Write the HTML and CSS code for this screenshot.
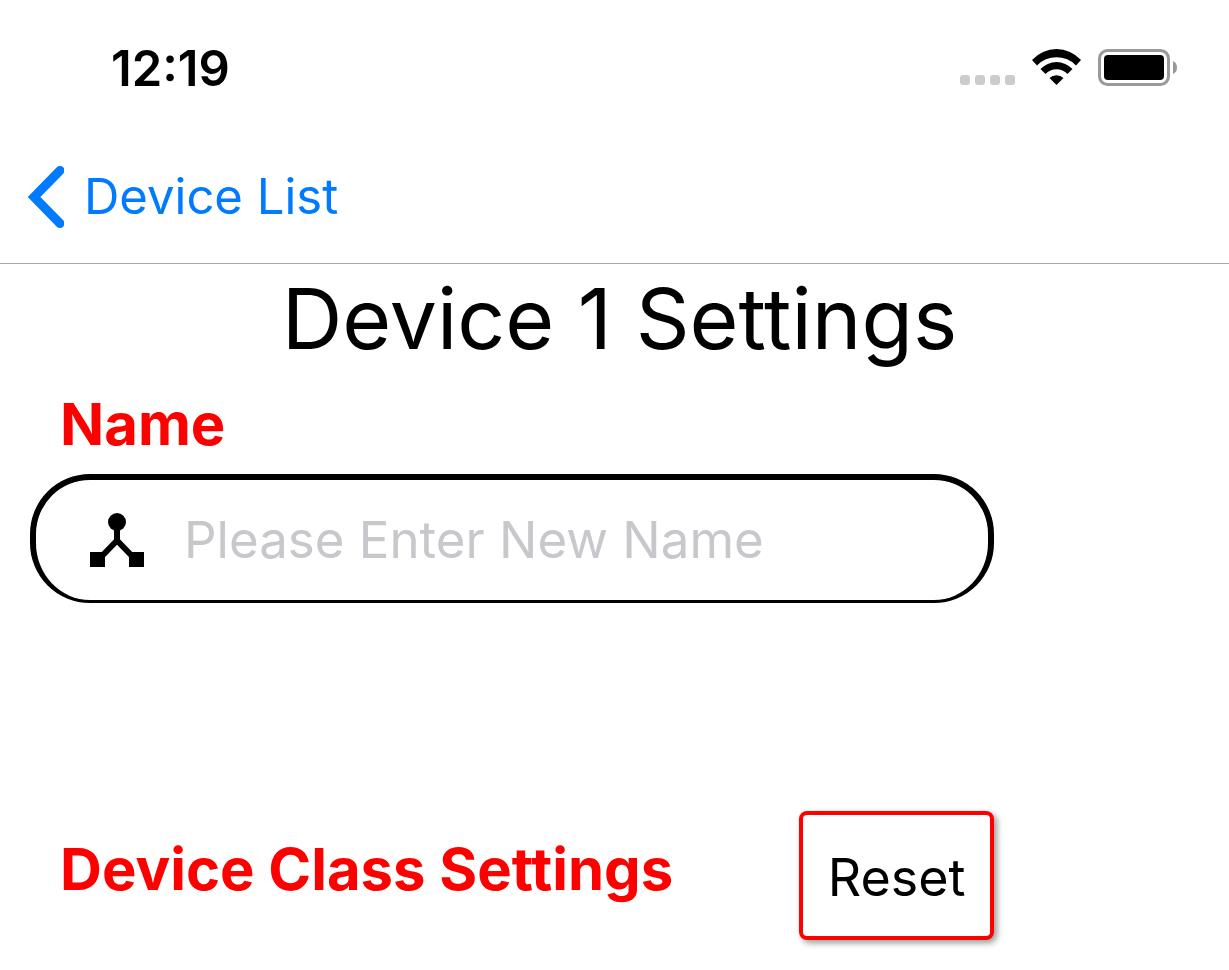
FILE: index.html
```html
<!DOCTYPE html>
<html lang="en">
<head>
<meta charset="utf-8">
<title>Device 1 Settings</title>
<link rel="stylesheet" href="styles.css">
</head>
<body>
<div class="status">
  <time class="clock">12:19</time>
  <div class="indicators">
    <svg width="56" height="37" viewBox="0 0 56 37" aria-hidden="true"><g fill="#ccc"><rect width="10" height="10" y="26" rx="3"/><rect x="15" width="10" height="10" y="26" rx="3"/><rect x="30" width="10" height="10" y="26" rx="3"/><rect x="45" width="10" height="10" y="26" rx="3"/></g></svg>
    <svg width="50" height="37" viewBox="0 0 50 37" aria-hidden="true"><path d="M0 11A33 33 0 0 1 49 11L44 16.500A27 27 0 0 0 5 16.500Z"/><path d="M8.500 20A22 22 0 0 1 40.500 20L35.500 25A15 15 0 0 0 13.500 25Z"/><path d="M17.500 29A10 10 0 0 1 31.500 29L24.500 36Z"/></svg>
    <svg width="80" height="37" viewBox="0 0 80 37" aria-hidden="true"><rect x="1.500" y="1.500" width="69" height="34" rx="8" fill="none" stroke="#999" stroke-width="3"/><rect x="6" y="6" width="60" height="25" rx="4"/><path d="M75 12q4 2 4 6.500t-4 6.500z" fill="#999"/></svg>
  </div>
</div>
<nav class="nav">
  <a class="back" href="#"><svg width="36" height="62" viewBox="0 0 36 62" aria-hidden="true"><path d="M32 4.500L6 31l26 26.500" fill="none" stroke="#007aff" stroke-width="9" stroke-linecap="round"/></svg><span>Device List</span></a>
</nav>
<main class="main">
  <h1 class="title">Device 1 Settings</h1>
  <form class="form">
    <label class="heading" for="name">Name</label>
    <div class="field">
      <svg width="54" height="54" viewBox="0 0 54 54" aria-hidden="true"><circle cx="27" cy="9" r="9"/><path d="M0 39h15v15H0zM39 39h15v15H39z"/><path d="M27 15v12M12 43l15-15.500L42 43" fill="none" stroke="#000" stroke-width="6"/></svg>
      <input class="input" id="name" type="text" placeholder="Please Enter New Name">
    </div>
    <div class="row">
      <h2 class="heading">Device Class Settings</h2>
      <button class="reset" type="button">Reset</button>
    </div>
  </form>
</main>
</body>
</html>
```
FILE: styles.css
```css
* { box-sizing: border-box; }
body { margin: 0; background: #fff; color: #000; font-family: Inter, "Liberation Sans", sans-serif; }
h1, h2 { margin: 0; }
svg { display: block; flex: none; }
.status { display: flex; justify-content: space-between; align-items: center; height: 136px; padding: 0 51px 0 111px; }
.clock { padding-top: 1px; font-size: 49px; font-weight: 600; line-height: 56px; }
.indicators { display: flex; align-items: center; gap: 16px; padding-bottom: 2px; }
.nav { display: flex; height: 128px; padding: 0 28px 6px; align-items: center; border-bottom: 1px solid #a7a7aa; }
.back { display: flex; align-items: center; gap: 20px; color: #007aff; font-size: 49px; line-height: 60px; text-decoration: none; }
.title { padding-left: 10px; font-size: 84px; font-weight: 400; line-height: 110px; text-align: center; }
.form { width: 81%; margin-top: 14px; padding: 0 1px 24px 30px; }
.heading { display: block; padding-left: 30px; color: red; font-size: 58px; font-weight: 700; line-height: 72px; }
.field { display: flex; align-items: center; gap: 40px; height: 129px; margin-top: 14px; padding: 0 54px; border: 6px solid #000; border-bottom-width: 3px; border-radius: 60px; }
.input { flex: 1; min-width: 0; padding: 0; border: 0; outline: 0; background: none; color: #000; font: inherit; font-size: 51px; line-height: 64px; }
.input::placeholder { color: #c7c7cc; opacity: 1; }
.row { display: flex; justify-content: space-between; align-items: center; margin-top: 208px; }
.row .heading { padding-bottom: 14px; }
.reset { height: 129px; padding: 4px 25px 0; border: 4px solid red; border-radius: 8px; background: #fff; color: #000; font: inherit; font-size: 52px; box-shadow: 3px 3px 6px rgb(0 0 0 / 40%); }
```
